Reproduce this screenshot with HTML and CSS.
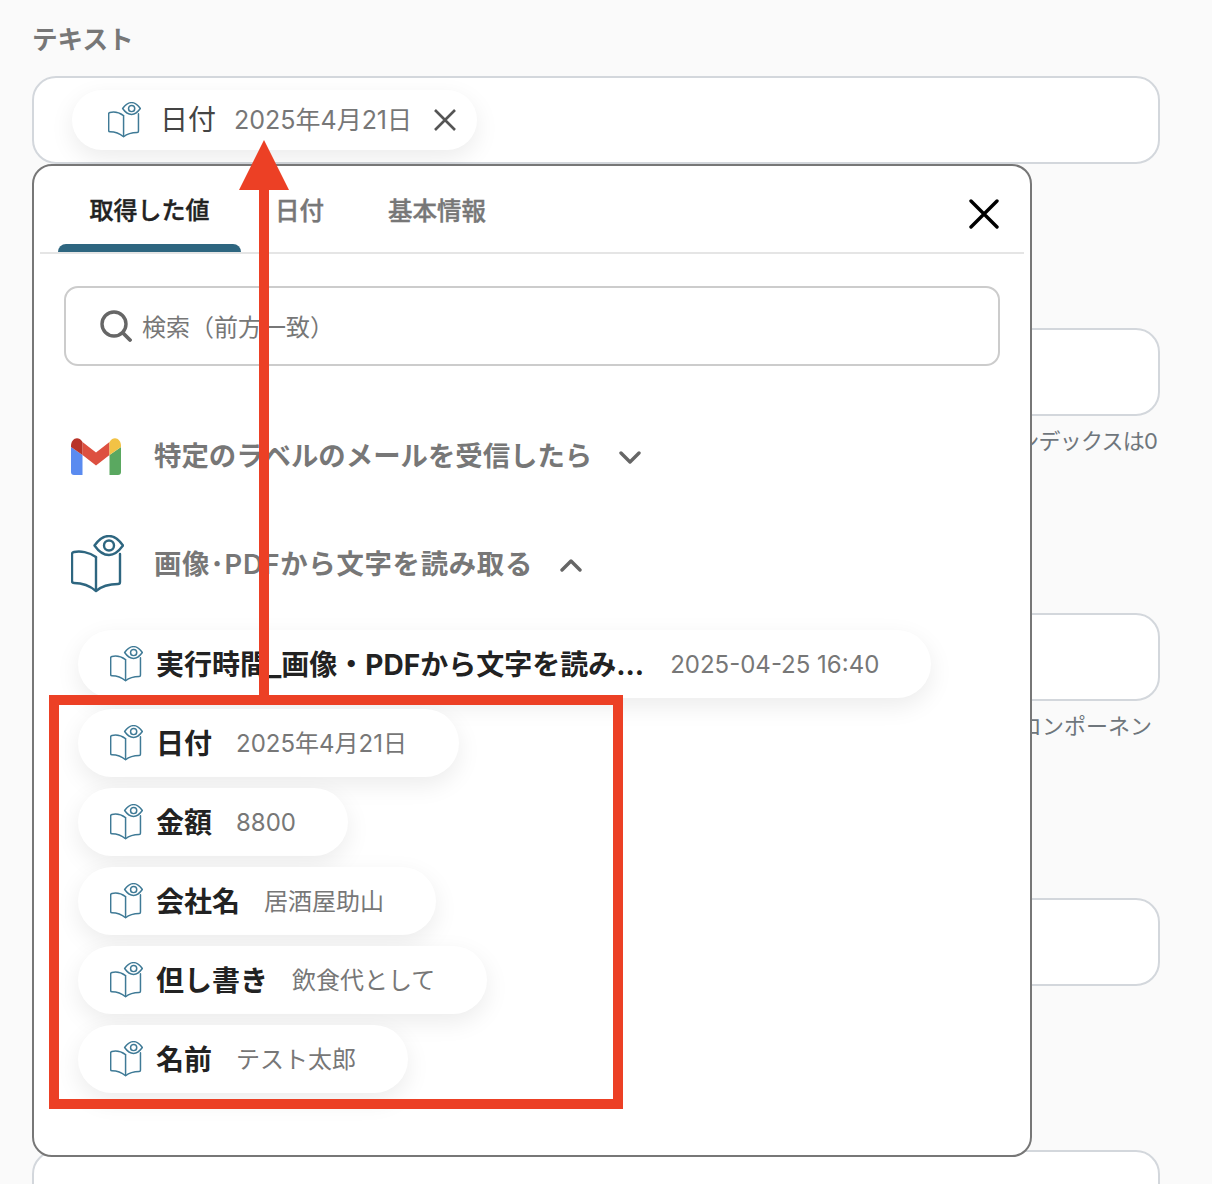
FILE: index.html
```html
<!DOCTYPE html>
<html lang="ja">
<head>
<meta charset="utf-8">
<title>テキスト</title>
<link rel="stylesheet" href="styles.css">
</head>
<body>
<svg class="defs" width="0" height="0" aria-hidden="true">
  <symbol id="book" viewBox="0 0 53 58">
    <path d="M23.5 10.5C28 4 33 1 38 1s9.500 3 14 9.500C48 16 43 20 38 20s-10-3-14.500-9.500Z" fill="none" stroke="currentColor" stroke-width="2.400" stroke-linejoin="round"/>
    <circle cx="38" cy="10.500" r="5" fill="none" stroke="currentColor" stroke-width="2.400"/>
    <path d="M25 22C18 17 9 15.500 3 17q-2 .5-2 2v27q0 2 2 2c7 0 15 2 22 8 7-6 15-7 22-7q2 0 2-2V19" fill="none" stroke="currentColor" stroke-width="2.400" stroke-linejoin="round" stroke-linecap="round"/>
    <path d="M25 22v34" fill="none" stroke="currentColor" stroke-width="2.400"/>
  </symbol>
</svg>

<main class="form">
  <h1 class="label">テキスト</h1>
  <div class="box box-first">
    <div class="chip">
      <svg class="icon-sm"><use href="#book"/></svg>
      <span class="chip-name">日付</span>
      <span class="chip-value">2025年4月21日</span>
      <svg class="chip-x" viewBox="0 0 24 24"><path d="M2 2l20 20M22 2L2 22" fill="none" stroke="currentColor" stroke-width="2.600"/></svg>
    </div>
  </div>
  <div class="box box-gap"></div>
  <p class="note note-one">インデックスは0</p>
  <div class="box"></div>
  <p class="note note-two">コンポーネン</p>
  <div class="box"></div>
  <div class="box box-gap"></div>
</main>

<section class="panel">
  <nav class="tabs">
    <span class="tab tab-active">取得した値</span>
    <span class="tab">日付</span>
    <span class="tab">基本情報</span>
    <svg class="close" viewBox="0 0 30 30"><path d="M2 2l26 26M28 2L2 28" fill="none" stroke="#000" stroke-width="3.400" stroke-linecap="round"/></svg>
  </nav>

  <div class="search">
    <svg class="search-icon" viewBox="0 0 32 32"><circle cx="14" cy="14" r="12" fill="none" stroke="#666" stroke-width="3.400"/><path d="M23 23l7 7" stroke="#666" stroke-width="3.800" stroke-linecap="round"/></svg>
    <span class="placeholder">検索（前方一致）</span>
  </div>

  <div class="source source-gmail">
    <svg class="gmail" viewBox="0 0 50 38">
      <path d="M0 10l11.500 8v20H3q-3 0-3-3Z" fill="#5a8bf0"/>
      <path d="M38.500 18L50 10v25q0 3-3 3h-8.500Z" fill="#5aa860"/>
      <path d="M11.500 5L25 15.500 38.500 5v13L25 28.500 11.500 18Z" fill="#dd5040"/>
      <path d="M0 10V9C0 2 7-2 11.500 5v13Z" fill="#b83328"/>
      <path d="M38.500 5C43-2 50 2 50 9v1l-11.500 8Z" fill="#f2c245"/>
    </svg>
    <span class="source-title">特定のラベルのメールを受信したら</span>
    <svg class="chevron" viewBox="0 0 22 14"><path d="M2 3l9 9 9-9" fill="none" stroke="#666" stroke-width="3.400" stroke-linecap="round" stroke-linejoin="round"/></svg>
  </div>

  <div class="source source-ocr">
    <svg class="icon-lg"><use href="#book"/></svg>
    <span class="source-title">画像･PDFから文字を読み取る</span>
    <svg class="chevron" viewBox="0 0 22 14"><path d="M2 12l9-9 9 9" fill="none" stroke="#666" stroke-width="3.400" stroke-linecap="round" stroke-linejoin="round"/></svg>
  </div>

  <ul class="pills">
    <li class="pill"><svg class="icon-sm"><use href="#book"/></svg><span class="pill-name pill-name-long">実行時間_画像・PDFから文字を読み...</span><span class="pill-value">2025-04-25 16:40</span></li>
    <li class="pill"><svg class="icon-sm"><use href="#book"/></svg><span class="pill-name">日付</span><span class="pill-value">2025年4月21日</span></li>
    <li class="pill"><svg class="icon-sm"><use href="#book"/></svg><span class="pill-name">金額</span><span class="pill-value">8800</span></li>
    <li class="pill"><svg class="icon-sm"><use href="#book"/></svg><span class="pill-name">会社名</span><span class="pill-value">居酒屋助山</span></li>
    <li class="pill"><svg class="icon-sm"><use href="#book"/></svg><span class="pill-name">但し書き</span><span class="pill-value">飲食代として</span></li>
    <li class="pill"><svg class="icon-sm"><use href="#book"/></svg><span class="pill-name">名前</span><span class="pill-value">テスト太郎</span></li>
  </ul>
</section>

<div class="frame"></div>
<svg class="arrow" viewBox="0 0 50 556"><path d="M25 0l25 50H30v506H20V50H0Z" fill="#ec4025"/></svg>
</body>
</html>
```

FILE: styles.css
```css
* { box-sizing: border-box; }

html, body { height: 1184px; overflow: hidden; }

body {
  margin: 0;
  position: relative;
  background: #fafafa;
  font-family: Inter, "Noto Sans CJK JP", sans-serif;
  color: #222;
}

.defs { position: absolute; }

.form { padding: 20px 52px 0 32px; }

.label {
  margin: 0 0 20px;
  padding-top: 2px;
  height: 36px;
  font-size: 25.600px;
  line-height: 36px;
  font-weight: 600;
  color: #777;
}

.box {
  height: 88px;
  background: #fff;
  border: 2px solid #d3d7dc;
  border-radius: 24px;
}

.box-first {
  display: flex;
  align-items: center;
  padding-left: 38px;
}

.box-gap { margin-top: 164px; }

.note {
  margin: 0;
  height: 197px;
  padding: 10px 2px 0 0;
  text-align: right;
  font-size: 22px;
  line-height: 30px;
  color: #6f767c;
}

.note-one { padding-right: 3px; letter-spacing: -.8px; }

.note-two { padding-right: 8px; }

.chip {
  display: flex;
  align-items: center;
  width: 405px;
  height: 60px;
  padding-left: 36px;
  background: #fff;
  border-radius: 30px;
  box-shadow: 0 8px 24px rgba(0, 0, 0, .08);
}

.icon-sm {
  flex: none;
  width: 33px;
  height: 36px;
  color: #3f7a96;
}

.icon-lg {
  flex: none;
  width: 53px;
  height: 58px;
  color: #2e6680;
}

.chip-name {
  margin: 0 0 4px 19px;
  font-size: 28px;
  color: #444;
}

.chip-value {
  margin: 0 0 4px 18px;
  font-size: 25px;
  color: #777;
  white-space: nowrap;
}

.chip-x {
  flex: none;
  width: 24px;
  height: 24px;
  margin-left: 21px;
  color: #555;
}

.panel {
  position: absolute;
  left: 32px;
  top: 164px;
  width: 1000px;
  height: 993px;
  padding: 0 6px;
  background: #fff;
  border: 2px solid #777;
  border-radius: 20px;
}

.tabs {
  display: flex;
  height: 88px;
  padding: 0 0 0 18px;
  border-bottom: 2px solid #e5e5e5;
}

.tab {
  display: flex;
  flex-direction: column;
  justify-content: space-between;
  height: 86px;
  padding: 27px 32px 0;
  font-size: 24.500px;
  line-height: 36px;
  font-weight: 500;
  -webkit-text-stroke: .4px currentColor;
  color: #777;
}

.tab-active {
  width: 183px;
  margin-right: 2px;
  padding: 27px 0 0;
  align-items: center;
  font-size: 24px;
  color: #222;
}

.tab-active::after {
  content: "";
  align-self: stretch;
  height: 8px;
  background: #2e6680;
  border-radius: 8px 8px 0 0;
}

.close {
  width: 30px;
  height: 30px;
  margin: 33px 25px 0 auto;
}

.search {
  display: flex;
  align-items: center;
  height: 80px;
  margin: 32px 24px 0;
  padding-left: 34px;
  border: 2px solid #ccc;
  border-radius: 14px;
}

.search-icon { width: 32px; height: 32px; }

.placeholder {
  margin: 0 0 2px 10px;
  font-size: 24px;
  color: #777;
}

.source {
  display: flex;
  align-items: center;
  height: 60px;
  padding-left: 31px;
}

.source-gmail { margin-top: 60px; }

.source-ocr { margin-top: 48px; }

.source-ocr .source-title { letter-spacing: .7px; }

.gmail { flex: none; width: 50px; height: 38px; margin-right: 33px; }

.source-ocr .icon-lg { margin-right: 30px; }

.source-title {
  margin-bottom: 4px;
  font-size: 27.400px;
  font-weight: 600;
  color: #777;
}

.chevron { width: 22px; height: 14px; margin: 2px 0 0 27px; }

.pills {
  display: flex;
  flex-direction: column;
  align-items: flex-start;
  gap: 11px;
  list-style: none;
  margin: 36px 0 0 38px;
  padding: 0;
}

.pill {
  display: flex;
  align-items: center;
  height: 68px;
  padding: 0 52px 0 32px;
  background: #fff;
  border-radius: 34px;
  box-shadow: 0 8px 24px rgba(0, 0, 0, .08);
}

.pill-name {
  margin: 1px 0 0 13px;
  font-size: 28px;
  line-height: 40px;
  font-weight: 700;
  color: #222;
  white-space: nowrap;
}

.pill-name-long { margin-right: 2px; }

.pill-value {
  margin: 2px 0 0 24px;
  font-size: 24px;
  line-height: 36px;
  color: #777;
  white-space: nowrap;
}

.frame {
  position: absolute;
  left: 49px;
  top: 695px;
  width: 574px;
  height: 414px;
  border: 10px solid #ec4025;
}

.arrow {
  position: absolute;
  left: 239px;
  top: 140px;
  width: 50px;
  height: 556px;
}
```
